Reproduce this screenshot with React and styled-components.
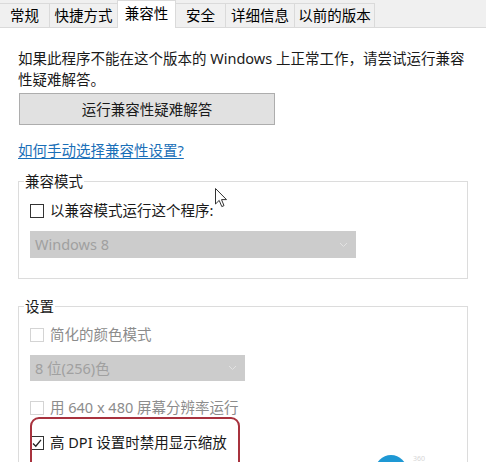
import React from "react";
import styled, { createGlobalStyle } from "styled-components";

const GlobalStyle = createGlobalStyle`
	html, body {
		margin: 0;
		height: 462px;
		overflow: hidden;
		background: #fff;
	}
	body {
		font-family: "Noto Sans", "Noto Sans CJK SC", sans-serif;
		font-size: 14.5px;
		line-height: 21px;
		color: #1a1a1a;
	}
`

const Page = styled.div`
	position: relative;
	width: 486px;
	height: 462px;
	overflow: hidden;
`

const TabBar = styled.div`
	display: flex;
	align-items: flex-end;
	height: 27px;
	background: #f0f0f0;
	border-bottom: 1px solid #dadada;
`

const Tab = styled.div`
	box-sizing: border-box;
	position: relative;
	z-index: ${p => (p.$active ? 1 : 0)};
	width: ${p => p.$w}px;
	height: ${p => (p.$active ? 28 : 24)}px;
	margin-bottom: ${p => (p.$active ? -1 : 0)}px;
	display: flex;
	align-items: center;
	justify-content: center;
	padding-bottom: ${p => (p.$active ? 3 : 0)}px;
	background: ${p => (p.$active ? "#fff" : "#f0f0f0")};
	border: 1px solid #dadada;
	border-bottom: none;
	margin-left: -1px;
	color: #000;
	white-space: nowrap;
`

const Content = styled.div`
	padding: 0 18px;
`

const Intro = styled.p`
	margin: 20px 0 0;
	width: 450px;
`

const Button = styled.button`
	display: block;
	box-sizing: border-box;
	width: 256px;
	height: 32px;
	margin: 3px 0 0 1px;
	background: #e1e1e1;
	border: 1px solid #adadad;
	font: inherit;
	color: #1a1a1a;
`

const HelpLink = styled.a`
	display: inline-block;
	margin-top: 15px;
	color: #1a6fb8;
	text-decoration: underline;
	text-underline-offset: 2px;
`

const Group = styled.fieldset`
	box-sizing: border-box;
	width: 450px;
	margin: ${p => p.$top}px 0 0;
	padding: ${p => p.$padTop}px 11px ${p => p.$padBottom}px;
	border: 1px solid #dcdcdc;
`

const Legend = styled.legend`
	margin-left: -6px;
	padding: 0 1px;
	color: #1a1a1a;
`

const CheckRow = styled.label`
	position: relative;
	display: flex;
	align-items: center;
	gap: 6px;
	margin-top: ${p => p.$top || 0}px;
	color: ${p => (p.$disabled ? "#8c8c8c" : "#1a1a1a")};

	${p =>
		p.$marked &&
		`
		&::after {
			content: "";
			position: absolute;
			left: 0;
			top: -15px;
			width: 206px;
			height: 50px;
			border: 2px solid #a8323e;
			border-radius: 9px;
		}
	`}
`

const Box = styled.span`
	box-sizing: border-box;
	flex: none;
	width: 14px;
	height: 14px;
	border: 1px solid ${p => (p.$disabled ? "#d4d4d4" : "#333")};
	background: #fff;
	display: flex;
	align-items: center;
	justify-content: center;
`

const Select = styled.div`
	box-sizing: border-box;
	display: flex;
	align-items: center;
	justify-content: space-between;
	width: ${p => p.$w}px;
	height: ${p => p.$h}px;
	margin-top: ${p => p.$top}px;
	padding: 0 8px 0 5px;
	background: #cccccc;
	color: #a0a0a0;
`

const Cursor = styled.svg`
	position: absolute;
	left: 215px;
	top: 188px;
`

const Watermark = styled.div`
	position: absolute;
	left: 375px;
	top: 455px;
	display: flex;
	align-items: flex-start;
	gap: 6px;
	color: #d6d6d6;
	font-size: 7px;
	line-height: 7px;
`

const Bubble = styled.div`
	width: 32px;
	height: 32px;
	border-radius: 50%;
	background: #1e98d4;
`

const Check = () => (
	<svg width="12" height="12" viewBox="0 0 12 12">
		<polyline points="2,6.5 4.8,9.2 10,2.8" fill="none" stroke="#222" strokeWidth="1.3" />
	</svg>
)

const Chevron = () => (
	<svg width="9" height="6" viewBox="0 0 9 6">
		<polyline points="1,1 4.5,4.5 8,1" fill="none" stroke="#e2e2e2" strokeWidth="1" />
	</svg>
)

const tabs = [
	{ name: "常规", w: 51 },
	{ name: "快捷方式", w: 69 },
	{ name: "兼容性", w: 59, active: true },
	{ name: "安全", w: 51 },
	{ name: "详细信息", w: 70 },
	{ name: "以前的版本", w: 81 },
]

const App = () => (
	<Page>
		<GlobalStyle />
		<TabBar>
			{tabs.map(t => (
				<Tab key={t.name} $w={t.w} $active={t.active}>
					{t.name}
				</Tab>
			))}
		</TabBar>
		<Content>
			<Intro>如果此程序不能在这个版本的 Windows 上正常工作，请尝试运行兼容性疑难解答。</Intro>
			<Button>运行兼容性疑难解答</Button>
			<HelpLink>如何手动选择兼容性设置?</HelpLink>

			<Group $top={10} $padTop={8} $padBottom={20}>
				<Legend>兼容模式</Legend>
				<CheckRow>
					<Box />
					以兼容模式运行这个程序:
				</CheckRow>
				<Select $w={326} $h={27} $top={10}>
					Windows 8
					<Chevron />
				</Select>
			</Group>

			<Group $top={17} $padTop={7} $padBottom={80}>
				<Legend>设置</Legend>
				<CheckRow $disabled>
					<Box $disabled />
					简化的颜色模式
				</CheckRow>
				<Select $w={215} $h={26} $top={10}>
					8 位(256)色
					<Chevron />
				</Select>
				<CheckRow $disabled $top={16}>
					<Box $disabled />
					用 640 x 480 屏幕分辨率运行
				</CheckRow>
				<CheckRow $marked $top={14}>
					<Box>
						<Check />
					</Box>
					高 DPI 设置时禁用显示缩放
				</CheckRow>
			</Group>
		</Content>

		<Cursor width="13" height="20" viewBox="0 0 13 20">
			<path d="M0.5 0.5 L0.5 16 L4.2 12.4 L6.8 18.6 L9 17.6 L6.5 11.6 L11.5 11.6 Z" fill="#fff" stroke="#333" strokeWidth="1" />
		</Cursor>
		<Watermark>
			<Bubble />
			<span>360</span>
		</Watermark>
	</Page>
)

export default App;
